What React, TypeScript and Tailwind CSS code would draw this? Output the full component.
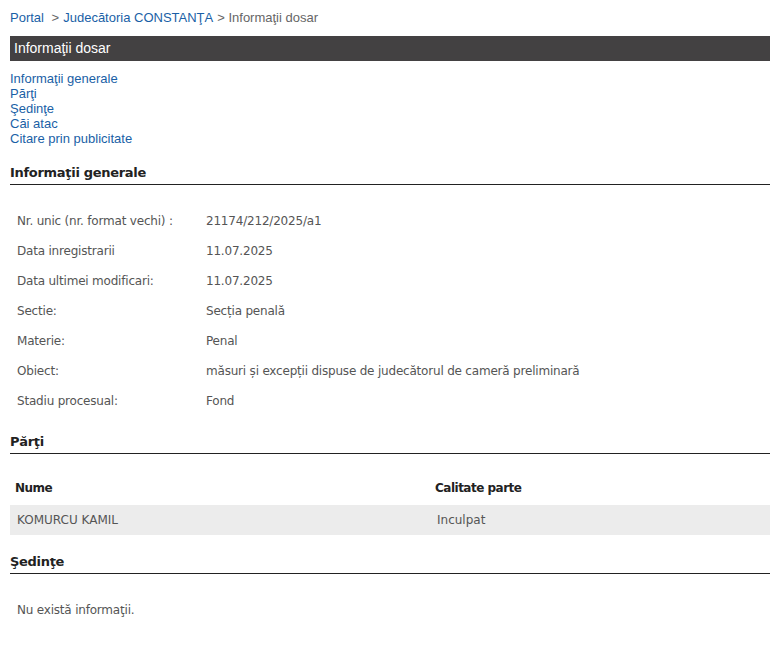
import React from 'react';

const details: Array<{ label: string; value: string }> = [
  { label: 'Nr. unic (nr. format vechi) :', value: '21174/212/2025/a1' },
  { label: 'Data inregistrarii', value: '11.07.2025' },
  { label: 'Data ultimei modificari:', value: '11.07.2025' },
  { label: 'Sectie:', value: 'Secția penală' },
  { label: 'Materie:', value: 'Penal' },
  { label: 'Obiect:', value: 'măsuri și excepții dispuse de judecătorul de cameră preliminară' },
  { label: 'Stadiu procesual:', value: 'Fond' },
];

const links = ['Informaţii generale', 'Părţi', 'Şedinţe', 'Căi atac', 'Citare prin publicitate'];

const SectionTitle: React.FC<{ title: string }> = ({ title }) => (
  <h2 className="text-[13px] font-bold text-[#222] leading-[16px] pb-[3px] border-b border-[#222] tracking-[-0.3px]">
    {title}
  </h2>
);

export default function App() {
  return (
    <div className="w-[780px] h-[648px] bg-white px-[10px] pt-[10px] overflow-hidden" style={{ fontFamily: '"DejaVu Sans", sans-serif' }}>
      <div className="text-[13px] leading-[16px] font-['Liberation_Sans',Arial,sans-serif] flex gap-[4px]">
        <a className="text-[#1a5fa6]">Portal</a>
        <span className="text-[#666]">&nbsp;&gt;</span>
        <a className="text-[#1a5fa6]">Judecătoria CONSTANŢA</a>
        <span className="text-[#666]">&gt; Informaţii dosar</span>
      </div>

      <div className="mt-[10px] h-[25px] bg-[#434142] text-white text-[14px] leading-[25px] pl-[4px] font-['Liberation_Sans',Arial,sans-serif]">
        Informaţii dosar
      </div>

      <nav className="mt-[10px] flex flex-col text-[13px] leading-[15px] font-['Liberation_Sans',Arial,sans-serif]">
        {links.map(l => (
          <a key={l} className="text-[#1a5fa6]">{l}</a>
        ))}
      </nav>

      <div className="mt-[19px]">
        <SectionTitle title="Informaţii generale" />
        <div className="mt-[21px] flex flex-col">
          {details.map(d => (
            <div key={d.label} className="flex h-[30px] items-center text-[12px] text-[#555] tracking-[-0.2px]">
              <div className="w-[196px] pl-[7px]">{d.label}</div>
              <div>{d.value}</div>
            </div>
          ))}
        </div>
      </div>

      <div className="mt-[18px]">
        <SectionTitle title="Părţi" />
        <div className="mt-[17px]">
          <div className="flex h-[34px] items-center text-[12px] font-bold text-[#222] tracking-[-0.5px]">
            <div className="w-[425px] pl-[5px]">Nume</div>
            <div>Calitate parte</div>
          </div>
          <div className="flex h-[30px] items-center bg-[#ececec] text-[12px] text-[#555]">
            <div className="w-[427px] pl-[7px]">KOMURCU KAMIL</div>
            <div>Inculpat</div>
          </div>
        </div>
      </div>

      <div className="mt-[19px]">
        <SectionTitle title="Şedinţe" />
        <div className="mt-[27px] pl-[7px] text-[12px] text-[#555] tracking-[-0.2px]">Nu există informaţii.</div>
      </div>
    </div>
  );
}
